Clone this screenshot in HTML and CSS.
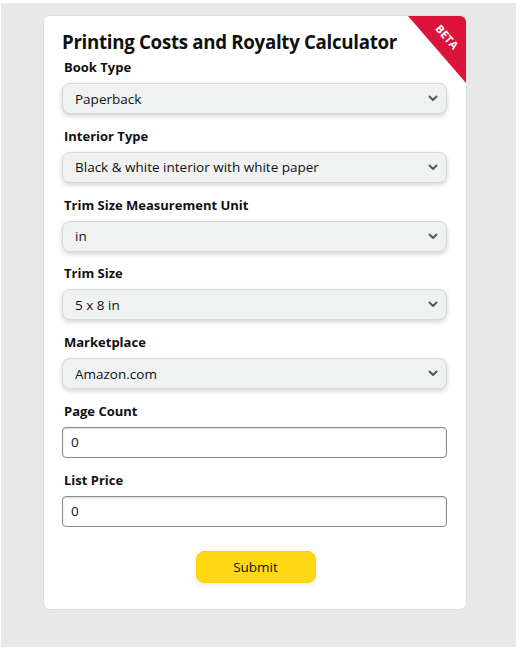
FILE: index.html
```html
<!DOCTYPE html>
<html lang="en">
<head>
<meta charset="utf-8">
<title>Printing Costs and Royalty Calculator</title>
<link rel="stylesheet" href="styles.css">
</head>
<body>
<div class="page">
  <div class="card">
    <div class="ribbon"><span class="ribbon-text">BETA</span></div>
    <h1 class="title">Printing Costs and Royalty Calculator</h1>
    <form class="form">
      <div class="field">
        <label class="label">Book Type</label>
        <div class="select-wrap">
          <select class="select"><option>Paperback</option></select>
          <svg class="chev" width="10" height="7" viewBox="0 0 10 7"><path d="M1.5 1.5 L5 5 L8.5 1.5" fill="none" stroke="#565959" stroke-width="2" stroke-linecap="round" stroke-linejoin="round"/></svg>
        </div>
      </div>
      <div class="field">
        <label class="label">Interior Type</label>
        <div class="select-wrap">
          <select class="select"><option>Black &amp; white interior with white paper</option></select>
          <svg class="chev" width="10" height="7" viewBox="0 0 10 7"><path d="M1.5 1.5 L5 5 L8.5 1.5" fill="none" stroke="#565959" stroke-width="2" stroke-linecap="round" stroke-linejoin="round"/></svg>
        </div>
      </div>
      <div class="field">
        <label class="label">Trim Size Measurement Unit</label>
        <div class="select-wrap">
          <select class="select"><option>in</option></select>
          <svg class="chev" width="10" height="7" viewBox="0 0 10 7"><path d="M1.5 1.5 L5 5 L8.5 1.5" fill="none" stroke="#565959" stroke-width="2" stroke-linecap="round" stroke-linejoin="round"/></svg>
        </div>
      </div>
      <div class="field">
        <label class="label">Trim Size</label>
        <div class="select-wrap">
          <select class="select"><option>5 x 8 in</option></select>
          <svg class="chev" width="10" height="7" viewBox="0 0 10 7"><path d="M1.5 1.5 L5 5 L8.5 1.5" fill="none" stroke="#565959" stroke-width="2" stroke-linecap="round" stroke-linejoin="round"/></svg>
        </div>
      </div>
      <div class="field">
        <label class="label">Marketplace</label>
        <div class="select-wrap">
          <select class="select"><option>Amazon.com</option></select>
          <svg class="chev" width="10" height="7" viewBox="0 0 10 7"><path d="M1.5 1.5 L5 5 L8.5 1.5" fill="none" stroke="#565959" stroke-width="2" stroke-linecap="round" stroke-linejoin="round"/></svg>
        </div>
      </div>
      <div class="field">
        <label class="label">Page Count</label>
        <input class="input" type="text" value="0">
      </div>
      <div class="field">
        <label class="label">List Price</label>
        <input class="input" type="text" value="0">
      </div>
      <div class="actions">
        <button class="submit" type="button">Submit</button>
      </div>
    </form>
  </div>
</div>
</body>
</html>
```

FILE: styles.css
```css
* { box-sizing: border-box; }
html, body { margin: 0; padding: 0; background: #ffffff; }
body {
  font-family: "Open Sans", "Noto Sans", Arial, sans-serif;
  color: #0f1111;
  padding: 3px 9px 3px 1px;
}
.page {
  background: #e8e8e8;
  height: 644px;
  padding: 12px 0 0 42px;
}
.card {
  position: relative;
  overflow: hidden;
  width: 424px;
  background: #ffffff;
  border: 1px solid #dddddd;
  border-radius: 7px;
  padding: 13px 19px 26px 18px;
}
.ribbon {
  position: absolute;
  top: 0;
  right: 0;
  width: 58px;
  height: 67px;
  background: #dc143c;
  clip-path: polygon(0 0, 100% 0, 100% 100%);
}
.ribbon-text {
  position: absolute;
  left: 39px;
  top: 21px;
  color: #ffffff;
  font-weight: 700;
  font-size: 11px;
  line-height: 12px;
  letter-spacing: 0.2px;
  white-space: nowrap;
  transform: translate(-50%, -50%) rotate(49deg);
}
.title {
  margin: 0 0 3px 0;
  font-size: 18.7px;
  font-weight: 700;
  line-height: 26px;
  letter-spacing: -0.3px;
}
.form {
  display: flex;
  flex-direction: column;
  gap: 12.8px;
}
.field {
  display: flex;
  flex-direction: column;
  gap: 7px;
}
.label {
  font-size: 13px;
  font-weight: 700;
  line-height: 18px;
  padding-left: 2px;
}
.select-wrap {
  position: relative;
}
.select {
  appearance: none;
  -webkit-appearance: none;
  display: block;
  width: 385px;
  height: 31px;
  margin: 0;
  padding: 0 30px 0 12px;
  font-family: inherit;
  font-size: 13.5px;
  color: #0f1111;
  background: #f0f2f2;
  border: 1px solid #d5d9d9;
  border-radius: 8px;
  box-shadow: 0 2px 5px rgba(15, 17, 17, 0.18);
  outline: none;
}
.chev {
  position: absolute;
  right: 9px;
  top: 12px;
  pointer-events: none;
}
.input {
  display: block;
  width: 385px;
  height: 31px;
  margin: 0;
  padding: 0 8px;
  font-family: inherit;
  font-size: 13.5px;
  color: #0f1111;
  background: #ffffff;
  border: 1px solid #888c8c;
  border-radius: 4px;
  box-shadow: inset 0 1px 2px rgba(15, 17, 17, 0.15);
  outline: none;
}
.actions {
  display: flex;
  justify-content: center;
  padding-top: 11px;
  padding-left: 2px;
}
.submit {
  width: 120px;
  height: 32px;
  font-family: inherit;
  font-size: 13.5px;
  color: #0f1111;
  background: #ffd814;
  border: 1px solid #fcd200;
  border-radius: 8px;
  box-shadow: 0 2px 5px rgba(213, 217, 217, 0.5);
  cursor: pointer;
}
```
